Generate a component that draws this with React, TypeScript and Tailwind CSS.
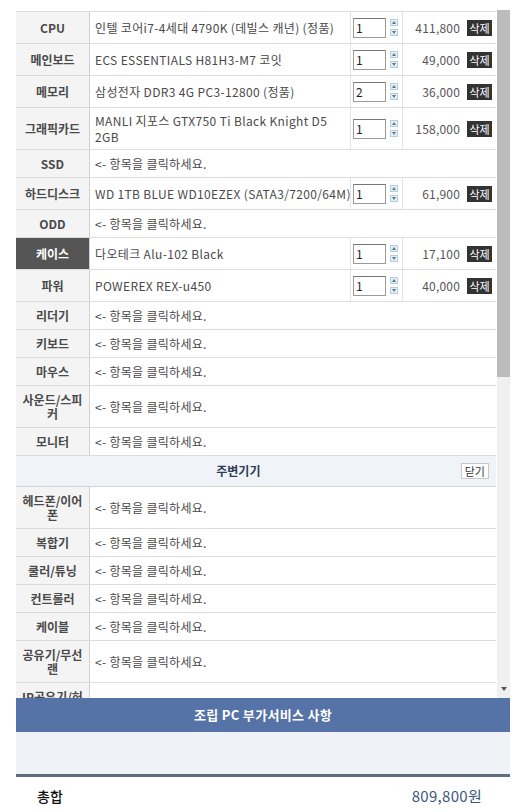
import type { ReactNode } from 'react'

type Part = {
  label: string
  name?: ReactNode
  qty?: number
  price?: string
  h: string
  active?: boolean
}

const parts: Part[] = [
  { label: 'CPU', name: '인텔 코어i7-4세대 4790K (데빌스 캐년) (정품)', qty: 1, price: '411,800', h: 'h-[32px]' },
  { label: '메인보드', name: 'ECS ESSENTIALS H81H3-M7 코잇', qty: 1, price: '49,000', h: 'h-[32px]' },
  { label: '메모리', name: '삼성전자 DDR3 4G PC3-12800 (정품)', qty: 2, price: '36,000', h: 'h-[32px]' },
  { label: '그래픽카드', name: <>MANLI 지포스 GTX750 Ti Black Knight D5<br />2GB</>, qty: 1, price: '158,000', h: 'h-[42px]' },
  { label: 'SSD', h: 'h-[28px]' },
  { label: '하드디스크', name: 'WD 1TB BLUE WD10EZEX (SATA3/7200/64M)', qty: 1, price: '61,900', h: 'h-[32px]' },
  { label: 'ODD', h: 'h-[28px]' },
  { label: '케이스', name: '다오테크 Alu-102 Black', qty: 1, price: '17,100', h: 'h-[32px]', active: true },
  { label: '파워', name: 'POWEREX REX-u450', qty: 1, price: '40,000', h: 'h-[32px]' },
  { label: '리더기', h: 'h-[28px]' },
  { label: '키보드', h: 'h-[28px]' },
  { label: '마우스', h: 'h-[28px]' },
  { label: '사운드/스피커', h: 'h-[42px]' },
  { label: '모니터', h: 'h-[28px]' },
]

const extras: Part[] = [
  { label: '헤드폰/이어폰', h: 'h-[42px]' },
  { label: '복합기', h: 'h-[28px]' },
  { label: '쿨러/튜닝', h: 'h-[28px]' },
  { label: '컨트롤러', h: 'h-[28px]' },
  { label: '케이블', h: 'h-[28px]' },
  { label: '공유기/무선랜', h: 'h-[42px]' },
  { label: 'IP공유기/허브', h: 'h-[42px]' },
]

function Spinner() {
  return (
    <div className="flex flex-col gap-[3px] ml-[4px]">
      <svg width="8" height="7" viewBox="0 0 8 7">
        <rect x="0.5" y="0.5" width="7" height="6" fill="#e3eef5" stroke="#b9cdd9" />
        <path d="M2 5 L4 2 L6 5 Z" fill="#4f7f95" />
      </svg>
      <svg width="8" height="7" viewBox="0 0 8 7">
        <rect x="0.5" y="0.5" width="7" height="6" fill="#e3eef5" stroke="#b9cdd9" />
        <path d="M2 2 L6 2 L4 5 Z" fill="#4f7f95" />
      </svg>
    </div>
  )
}

function Row({ p }: { p: Part }) {
  return (
    <div className={`flex border-b border-[#dcdcdc] ${p.h}`}>
      <div
        className={`w-[74px] shrink-0 flex items-center justify-center text-center px-[2px] font-bold text-[12px] leading-[14px] border-r border-[#d0d0d0] ${
          p.active ? 'bg-[#555555] text-white' : 'bg-[#f4f4f4] text-[#4a4a4a]'
        }`}
      >
        {p.label}
      </div>
      {p.name ? (
        <>
          <div className="w-[261px] shrink-0 flex items-center pl-[5px] text-[12px] leading-[16px] text-[#4a4a4a] border-r border-[#e4e4e4] whitespace-nowrap tracking-[0.35px]">
            <span>{p.name}</span>
          </div>
          <div className="w-[52px] shrink-0 flex items-center pl-[2px] border-r border-[#e4e4e4]">
            <div className="w-[33px] h-[20px] border border-[#9a9a9a] border-t-[#777] bg-white text-[12px] leading-[18px] pl-[2px] text-[#222]">
              {p.qty}
            </div>
            <Spinner />
          </div>
          <div className="flex-1 flex items-center justify-end pr-[4px] text-[12px] text-[#555] tracking-[0.2px]">
            <span>{p.price}</span>
            <span className="ml-[7px] w-[25px] h-[16px] bg-[#333] text-white text-[11px] leading-[16px] text-center tracking-normal">삭제</span>
          </div>
        </>
      ) : (
        <div className="flex-1 flex items-center pl-[5px] text-[12px] text-[#4a4a4a] tracking-[0.3px]">&lt;- 항목을 클릭하세요.</div>
      )}
    </div>
  )
}

export default function App() {
  return (
    <div
      className="w-[531px] h-[812px] bg-white pt-[10px] pl-4 pr-[21px] overflow-hidden"
      style={{ fontFamily: '"Noto Sans CJK KR", "Noto Sans", sans-serif' }}
    >
      {/* scroll area */}
      <div className="flex h-[688px]">
        <div className="w-[480px] overflow-hidden pt-px">
          <div className="border-t border-[#dcdcdc]">
            {parts.map(p => <Row key={p.label} p={p} />)}

            <div className="flex items-center h-[31px] bg-[#f0f3f7] border-b border-[#cfd4da]">
              <div className="flex-1 text-center font-bold text-[12px] text-[#2e3d55]">주변기기</div>
              <span className="mr-[7px] px-[3px] h-[16px] border border-[#c8c8c8] bg-white text-[11px] leading-[14px] text-[#333]">닫기</span>
            </div>

            {extras.map(p => <Row key={p.label} p={p} />)}
          </div>
        </div>
        <div className="w-px" />
        <div className="w-[13px] bg-[#f0f0f0] flex flex-col">
          <div className="h-[367px] bg-[#bcbcbc]" />
          <div className="flex-1" />
          <div className="h-[12px] flex justify-center pt-[1px]">
            <svg width="6" height="5" viewBox="0 0 6 5">
              <path d="M0 0 L6 0 L3 4 Z" fill="#555" />
            </svg>
          </div>
        </div>
      </div>

      {/* 부가서비스 */}
      <div className="h-[34px] bg-[#5673a8] flex items-center justify-center text-white font-bold text-[13px] tracking-[0.3px]">
        조립 PC 부가서비스 사항
      </div>
      <div className="h-[42px] bg-[#eff3f8]" />
      <div className="h-[3px] bg-[#5c6e80]" />

      {/* 총합 */}
      <div className="h-[36px] flex items-center justify-between pl-[21px] pr-[28px] pt-[2px]">
        <span className="text-[14px] font-medium text-[#111]">총합</span>
        <span className="text-[15px] text-[#3d5a80] tracking-[0.3px]">809,800원</span>
      </div>
    </div>
  )
}
